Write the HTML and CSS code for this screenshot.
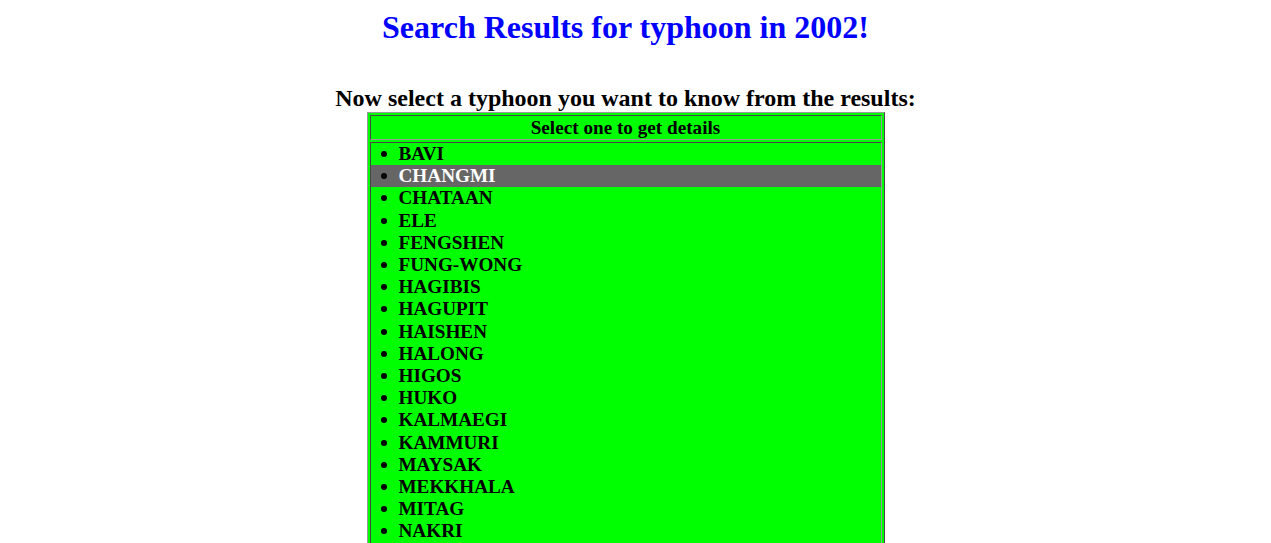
FILE: index.html
```html
<!DOCTYPE html>
<html>
<head>
<meta charset="utf-8">
<title>Search Results</title>
<link rel="stylesheet" href="styles.css">
</head>
<body>
<h1 class="title">Search Results for typhoon in 2002!</h1>
<h2 class="prompt">Now select a typhoon you want to know from the results:</h2>
<table class="results">
  <thead>
    <tr><th class="head">Select one to get details</th></tr>
  </thead>
  <tbody>
    <tr>
      <td class="cell">
        <ul class="list">
          <li class="item">BAVI</li>
          <li class="item active">CHANGMI</li>
          <li class="item">CHATAAN</li>
          <li class="item">ELE</li>
          <li class="item">FENGSHEN</li>
          <li class="item">FUNG-WONG</li>
          <li class="item">HAGIBIS</li>
          <li class="item">HAGUPIT</li>
          <li class="item">HAISHEN</li>
          <li class="item">HALONG</li>
          <li class="item">HIGOS</li>
          <li class="item">HUKO</li>
          <li class="item">KALMAEGI</li>
          <li class="item">KAMMURI</li>
          <li class="item">MAYSAK</li>
          <li class="item">MEKKHALA</li>
          <li class="item">MITAG</li>
          <li class="item">NAKRI</li>
          <li class="item">NOUL</li>
          <li class="item">PHANFONE</li>
          <li class="item">RAMMASUN</li>
          <li class="item">RUSA</li>
          <li class="item">SINLAKU</li>
          <li class="item">TAPAH</li>
          <li class="item">VONGFONG</li>
        </ul>
      </td>
    </tr>
  </tbody>
</table>
</body>
</html>
```

FILE: styles.css
```css
html, body {
  background: #ffffff;
}
body {
  margin: 0 20px 0 0;
  font-family: "Liberation Serif", "Times New Roman", serif;
  color: #000000;
}
.title {
  margin: 9px 0 0;
  font-size: 32px;
  line-height: 36px;
  font-weight: bold;
  text-align: center;
  color: #0000ff;
}
.prompt {
  margin: 39px 0 0;
  font-size: 24px;
  line-height: 28px;
  font-weight: bold;
  text-align: center;
}
.results {
  margin: 0 auto;
  width: 518px;
  background: #00ff00;
  border: 1px outset #9a9a9a;
  border-spacing: 2px;
  font-size: 19.2px;
}
.head {
  padding: 0;
  border: 1px inset #9a9a9a;
  line-height: 23px;
  font-weight: bold;
  text-align: center;
}
.cell {
  padding: 0;
  border: 1px inset #9a9a9a;
}
.list {
  margin: 0;
  padding: 0;
  list-style: none;
}
.item {
  padding-left: 10px;
  line-height: 22.2px;
  font-weight: bold;
}
.item::before {
  content: "";
  display: inline-block;
  width: 6px;
  height: 6px;
  border-radius: 50%;
  background: #000000;
  margin-right: 12px;
  vertical-align: 3px;
}
.active {
  background: #666666;
  color: #ffffff;
}
```
